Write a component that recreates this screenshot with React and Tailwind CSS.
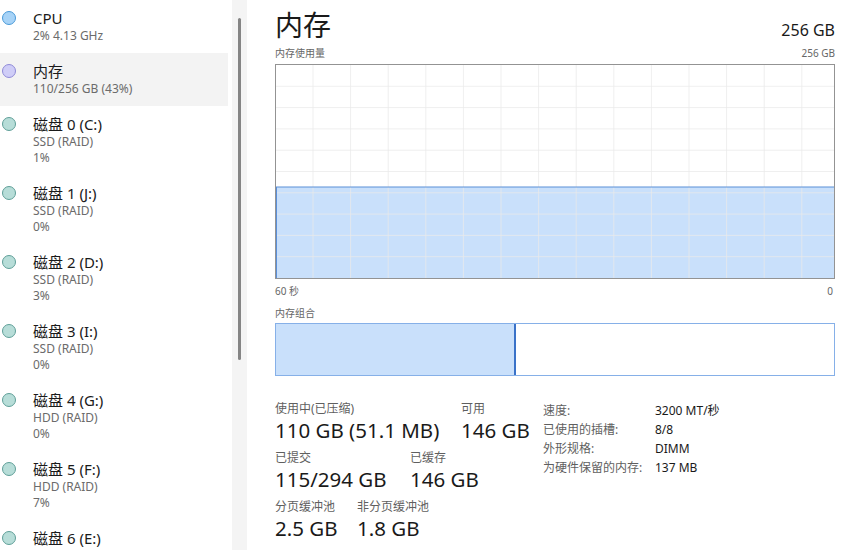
import React from 'react'

const font = { fontFamily: '"Noto Sans", "Noto Sans CJK SC", sans-serif' }

const items = [
  { title: 'CPU', lines: ['2% 4.13 GHz'], kind: 'cpu' },
  { title: '内存', lines: ['110/256 GB (43%)'], kind: 'mem', active: true },
  { title: '磁盘 0 (C:)', lines: ['SSD (RAID)', '1%'], kind: 'disk' },
  { title: '磁盘 1 (J:)', lines: ['SSD (RAID)', '0%'], kind: 'disk' },
  { title: '磁盘 2 (D:)', lines: ['SSD (RAID)', '3%'], kind: 'disk' },
  { title: '磁盘 3 (I:)', lines: ['SSD (RAID)', '0%'], kind: 'disk' },
  { title: '磁盘 4 (G:)', lines: ['HDD (RAID)', '0%'], kind: 'disk' },
  { title: '磁盘 5 (F:)', lines: ['HDD (RAID)', '7%'], kind: 'disk' },
  { title: '磁盘 6 (E:)', lines: ['SSD (RAID)', '0%'], kind: 'disk' },
]

const dotClass = {
  cpu: 'bg-[#a7d3f7] border-[#4a9ad8]',
  mem: 'bg-[#cfcdf7] border-[#8f8ad8]',
  disk: 'bg-[#b7ddd8] border-[#5f9f98]',
}

function SideItem({ item }) {
  return (
    <div className={`flex w-[228px] pt-2 pb-[9px] ${item.active ? 'bg-[#f3f3f3]' : ''}`}>
      <div className="w-[33px] flex justify-start pl-[2px] pt-[3px]">
        <div className={`w-[14px] h-[14px] rounded-full border ${dotClass[item.kind]}`} />
      </div>
      <div>
        <div className="text-[15px] leading-[20px] text-[#1a1a1a]">{item.title}</div>
        {item.lines.map((l, i) => (
          <div key={i} className="text-[12px] leading-[16px] text-[#6b6b6b]">{l}</div>
        ))}
      </div>
    </div>
  )
}

function UsageChart() {
  const w = 558
  const h = 213
  const cols = []
  for (let x = 37; x < w; x += 37.6) cols.push(x)
  const rows = []
  for (let i = 1; i < 10; i++) rows.push((h / 10) * i)
  const fillTop = 122
  return (
    <div className="border border-[#939393] h-[215px]">
      <svg width={w} height={h} className="block">
        <rect x="0" y={fillTop} width={w} height={h - fillTop} fill="#c9e0fb" />
        {cols.map((x) => (
          <line key={x} x1={x} y1="0" x2={x} y2={h} stroke="#e9e9e9" strokeOpacity="0.75" strokeWidth="1" />
        ))}
        {rows.map((y) => (
          <line key={y} x1="0" y1={y} x2={w} y2={y} stroke="#e9e9e9" strokeOpacity="0.75" strokeWidth="1" />
        ))}
        <line x1="0" y1={fillTop} x2={w} y2={fillTop} stroke="#5b8fd8" strokeWidth="1.2" />
        <line x1="0.5" y1={fillTop} x2="0.5" y2={h} stroke="#5b8fd8" strokeWidth="1" />
      </svg>
    </div>
  )
}

function Stat({ label, value, className = '' }) {
  return (
    <div className={className}>
      <div className="text-[12px] leading-[18px] text-[#5f5f5f]">{label}</div>
      <div className="text-[20.5px] leading-[24px] text-[#1a1a1a]">{value}</div>
    </div>
  )
}

export default function App() {
  const specs = [
    ['速度:', '3200 MT/秒'],
    ['已使用的插槽:', '8/8'],
    ['外形规格:', 'DIMM'],
    ['为硬件保留的内存:', '137 MB'],
  ]
  return (
    <div className="w-[845px] h-[550px] bg-white flex overflow-hidden" style={font}>
      {/* sidebar */}
      <div className="w-[232px] shrink-0">
        {items.map((it) => (
          <SideItem key={it.title} item={it} />
        ))}
      </div>
      {/* scrollbar */}
      <div className="w-[15px] shrink-0 bg-[#f4f4f4] flex justify-center pt-[18px]">
        <div className="w-[3px] h-[342px] rounded-full bg-[#858585]" />
      </div>

      {/* main */}
      <div className="flex-1 pl-[28px] pr-[10px]">
        <div className="flex items-end justify-between pt-[6px]">
          <div className="text-[28px] leading-[38px] text-[#1a1a1a]">内存</div>
          <div className="text-[16px] leading-[22px] text-[#1a1a1a] pb-[3px]">256 GB</div>
        </div>
        <div className="flex justify-between text-[10px] leading-[14px] text-[#666] mt-[2px] mb-[4px]">
          <span>内存使用量</span>
          <span>256 GB</span>
        </div>
        <UsageChart />
        <div className="flex justify-between text-[10px] leading-[14px] text-[#666] mt-[5px]">
          <span>60 秒</span>
          <span className="pr-[2px]">0</span>
        </div>
        <div className="text-[10px] leading-[14px] text-[#666] mt-[8px] mb-[3px]">内存组合</div>
        <div className="h-[53px] border border-[#86b0e8] flex">
          <div className="w-[240px] bg-[#c9e0fb] border-r-2 border-[#3a72c8]" />
          <div className="flex-1" />
        </div>

        <div className="flex mt-[24px]">
          <div className="w-[268px] flex flex-col gap-[7px]">
            <div className="flex">
              <Stat label="使用中(已压缩)" value="110 GB (51.1 MB)" className="w-[186px]" />
              <Stat label="可用" value="146 GB" />
            </div>
            <div className="flex">
              <Stat label="已提交" value="115/294 GB" className="w-[135px]" />
              <Stat label="已缓存" value="146 GB" />
            </div>
            <div className="flex">
              <Stat label="分页缓冲池" value="2.5 GB" className="w-[82px]" />
              <Stat label="非分页缓冲池" value="1.8 GB" />
            </div>
          </div>
          <div className="pt-[1px]">
            {specs.map(([k, v]) => (
              <div key={k} className="flex text-[12px] leading-[19px]">
                <span className="w-[112px] text-[#5f5f5f]">{k}</span>
                <span className="text-[#1a1a1a]">{v}</span>
              </div>
            ))}
          </div>
        </div>
      </div>
    </div>
  )
}
